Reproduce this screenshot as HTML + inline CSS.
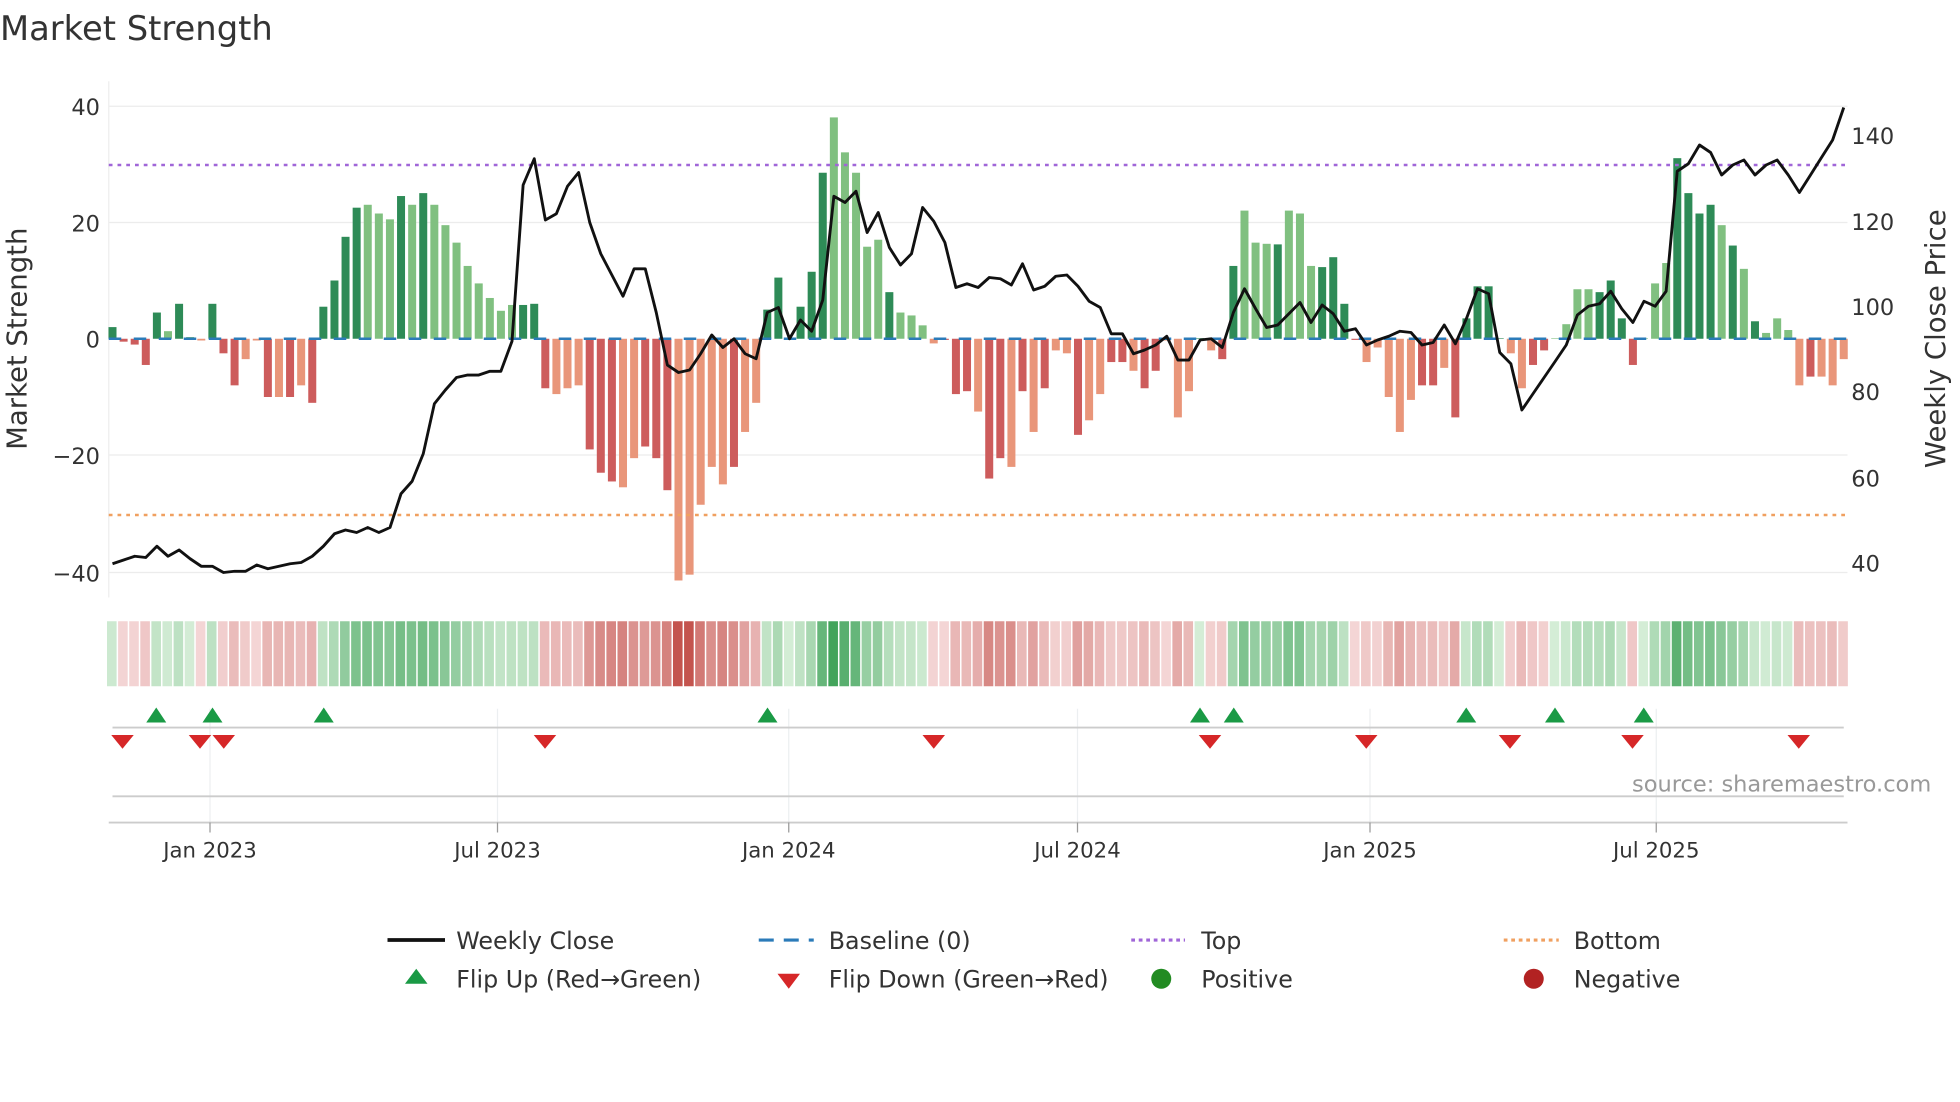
<!DOCTYPE html>
<html><head><meta charset="utf-8"><style>
html,body{margin:0;padding:0;background:#fff;}
svg{display:block;font-family:"DejaVu Sans","Liberation Sans",sans-serif;}
</style></head><body>
<svg id="s" width="1960" height="1102" viewBox="0 0 1568 881.6" xmlns="http://www.w3.org/2000/svg">
<text x="0" y="32" font-size="27" fill="#333">Market Strength</text>
<g stroke="#ececec" stroke-width="1">
<line x1="87" x2="1478" y1="85" y2="85"/><line x1="87" x2="1478" y1="178" y2="178"/>
<line x1="87" x2="1478" y1="364" y2="364"/><line x1="87" x2="1478" y1="458" y2="458"/>
<line x1="87" x2="87" y1="65" y2="478" stroke="#eee"/>
</g>
<g font-size="18" fill="#333" text-anchor="end">
<text x="80" y="92">40</text><text x="80" y="185">20</text><text x="80" y="278">0</text>
<text x="80" y="371">−20</text><text x="80" y="465">−40</text>
</g>
<g font-size="18" fill="#333">
<text x="1481" y="115">140</text><text x="1481" y="184">120</text><text x="1481" y="252">100</text>
<text x="1481" y="320">80</text><text x="1481" y="389">60</text><text x="1481" y="457">40</text>
</g>
<text transform="translate(21,271) rotate(-90)" font-size="22" fill="#333" text-anchor="middle">Market Strength</text>
<text transform="translate(1556,271) rotate(-90)" font-size="22" fill="#333" text-anchor="middle">Weekly Close Price</text>
<g id="bars"></g>
<line x1="87" x2="1478" y1="132" y2="132" stroke="#a066d8" stroke-width="2" stroke-dasharray="3,4"/>
<line x1="87" x2="1478" y1="412" y2="412" stroke="#f0a060" stroke-width="2" stroke-dasharray="3,4"/>
<line x1="87" x2="1478" y1="271" y2="271" stroke="#2b7bb9" stroke-width="2" stroke-dasharray="10,10"/>
<polyline id="price" fill="none" stroke="#111" stroke-width="2.3" stroke-linejoin="round"/>
<g id="heat"></g>
<g stroke="#eceff1" stroke-width="1">
<line x1="168" x2="168" y1="567" y2="658"/><line x1="398" x2="398" y1="567" y2="658"/>
<line x1="631" x2="631" y1="567" y2="658"/><line x1="862" x2="862" y1="567" y2="658"/>
<line x1="1096" x2="1096" y1="567" y2="658"/><line x1="1325" x2="1325" y1="567" y2="658"/>
</g>
<line x1="90" x2="1475" y1="582" y2="582" stroke="#ccc" stroke-width="1.5"/>
<line x1="90" x2="1475" y1="637" y2="637" stroke="#ccc" stroke-width="1.5"/>
<line x1="87" x2="1478" y1="658" y2="658" stroke="#ccc" stroke-width="1.5"/>
<g stroke="#999" stroke-width="1">
<line x1="168" x2="168" y1="658" y2="666"/><line x1="398" x2="398" y1="658" y2="666"/>
<line x1="631" x2="631" y1="658" y2="666"/><line x1="862" x2="862" y1="658" y2="666"/>
<line x1="1096" x2="1096" y1="658" y2="666"/><line x1="1325" x2="1325" y1="658" y2="666"/>
</g>
<g id="tri"></g>
<text x="1545" y="633" font-size="18" fill="#999" text-anchor="end">source: sharemaestro.com</text>
<g font-size="17" fill="#333" text-anchor="middle">
<text x="168" y="686">Jan 2023</text><text x="398" y="686">Jul 2023</text><text x="631" y="686">Jan 2024</text>
<text x="862" y="686">Jul 2024</text><text x="1096" y="686">Jan 2025</text><text x="1325" y="686">Jul 2025</text>
</g>
<g font-size="19" fill="#333">
<line x1="310" x2="356" y1="752" y2="752" stroke="#111" stroke-width="3"/>
<text x="365" y="759">Weekly Close</text>
<line x1="607" x2="651" y1="752" y2="752" stroke="#2b7bb9" stroke-width="2.5" stroke-dasharray="12,8"/>
<text x="663" y="759">Baseline (0)</text>
<line x1="905" x2="948" y1="752" y2="752" stroke="#a066d8" stroke-width="2.5" stroke-dasharray="3,3"/>
<text x="961" y="759">Top</text>
<line x1="1203" x2="1247" y1="752" y2="752" stroke="#f0a060" stroke-width="2.5" stroke-dasharray="3,3"/>
<text x="1259" y="759">Bottom</text>
<polygon points="333,775 342,787 324,787" fill="#1a9a45"/>
<text x="365" y="790">Flip Up (Red→Green)</text>
<polygon points="622,779 640,779 631,791" fill="#d62728"/>
<text x="663" y="790">Flip Down (Green→Red)</text>
<circle cx="929" cy="783" r="8" fill="#228b22"/>
<text x="961" y="790">Positive</text>
<circle cx="1227" cy="783" r="8" fill="#b22222"/>
<text x="1259" y="790">Negative</text>
</g>
</svg>
<script>
var v=[2,-.5,-1,-4.5,4.5,1.3,6,.3,-.3,6,-2.5,-8,-3.5,-.3,-10,-10,-10,-8,-11,5.5,10,17.5,22.5,23,21.5,20.5,24.5,23,25,23,19.5,16.5,12.5,9.5,7,4.8,5.8,5.8,6,-8.5,-9.5,-8.5,-8,-19,-23,-24.5,-25.5,-20.5,-18.5,-20.5,-26,-41.5,-40.5,-28.5,-22,-25,-22,-16,-11,5,10.5,.2,5.5,11.5,28.5,38,32,28.5,15.8,17,8,4.5,4,2.3,-.8,-.2,-9.5,-9,-12.5,-24,-20.5,-22,-9,-16,-8.5,-2,-2.5,-16.5,-14,-9.5,-4,-4,-5.5,-8.5,-5.5,-.3,-13.5,-9,.1,-2,-3.5,12.5,22,16.5,16.3,16.2,22,21.5,12.5,12.3,14,6,-.2,-4,-1.5,-10,-16,-10.5,-8,-8,-5,-13.5,3.5,9,9,.1,-2.5,-8.5,-4.5,-2,.1,2.5,8.5,8.5,8,10,3.5,-4.5,.1,9.5,13,31,25,21.5,23,19.5,16,12,3,1,3.5,1.5,-8,-6.5,-6.5,-8,-3.5];
var f="dddddldlldddlldldldddddllldldlllllllldddllldddlldddllllldllddddddllllldlllldddlddldldlldllddlddllldlddllldlllddddlllllddldddddllddllllddddlllddddldldlllldlllldlldl";
var n=v.length,x0=90,st=(1475-90)/(n-1),b="",h="";
function mix(a,c,t){return "rgb("+[0,1,2].map(function(i){return Math.round(a[i]+(c[i]-a[i])*t)}).join(",")+")";}
for(var i=0;i<n;i++){var x=x0+i*st,y=v[i],hh=Math.abs(y)*4.66,dk=f[i]=="d";
var c=y>=0?(dk?"#2e8b57":"#80c080"):(dk?"#cd5c5c":"#e9967a");
b+='<rect x="'+(x-3.2)+'" y="'+(y>=0?271-hh:271)+'" width="6.4" height="'+hh+'" fill="'+c+'"/>';
var t=Math.min(1,Math.abs(y)/40),hc=y>=0?mix([212,237,214],[58,160,85],t):mix([244,214,214],[196,84,78],t);
h+='<rect x="'+(x-4.4)+'" y="497" width="'+(st-1.2)+'" height="52" fill="'+hc+'"/>';}
document.getElementById("bars").innerHTML=b;document.getElementById("heat").innerHTML=h;
var py=[451,448,445,446,437,445,440,447,453,453,458,457,457,452,455,453,451,450,445,437,427,424,426,422,426,422,395,385,363,323,312,302,300,300,297,297,273,148,127,176,171,149,138,178,203,220,237,215,215,250,292,298,296,283,268,278,271,283,287,250,246,271,256,265,240,157,162,153,186,170,198,212,203,166,177,194,230,227,230,222,223,228,211,232,229,221,220,229,241,246,267,267,283,280,276,269,288,288,272,271,278,250,231,247,262,260,251,242,258,244,251,265,263,276,272,269,265,266,276,274,260,275,255,231,235,282,291,328,315,302,289,276,252,245,243,233,247,258,241,245,233,137,131,116,122,140,132,128,140,132,128,140,154,140,126,112,86];
var pts=[];for(var i=0;i<py.length;i++){pts.push((x0+i*(1475-90)/(py.length-1)).toFixed(1)+","+py[i]);}
document.getElementById("price").setAttribute("points",pts.join(" "));
var up=[125,170,259,614,960,987,1173,1244,1315],dn=[98,160,179,436,747,968,1093,1208,1306,1439],t="";
up.forEach(function(x){t+='<polygon points="'+x+',566 '+(x+8)+',578 '+(x-8)+',578" fill="#1a9a45"/>';});
dn.forEach(function(x){t+='<polygon points="'+(x-9)+',588 '+(x+9)+',588 '+x+',599" fill="#d62728"/>';});
document.getElementById("tri").innerHTML=t;
</script>
</body></html>
